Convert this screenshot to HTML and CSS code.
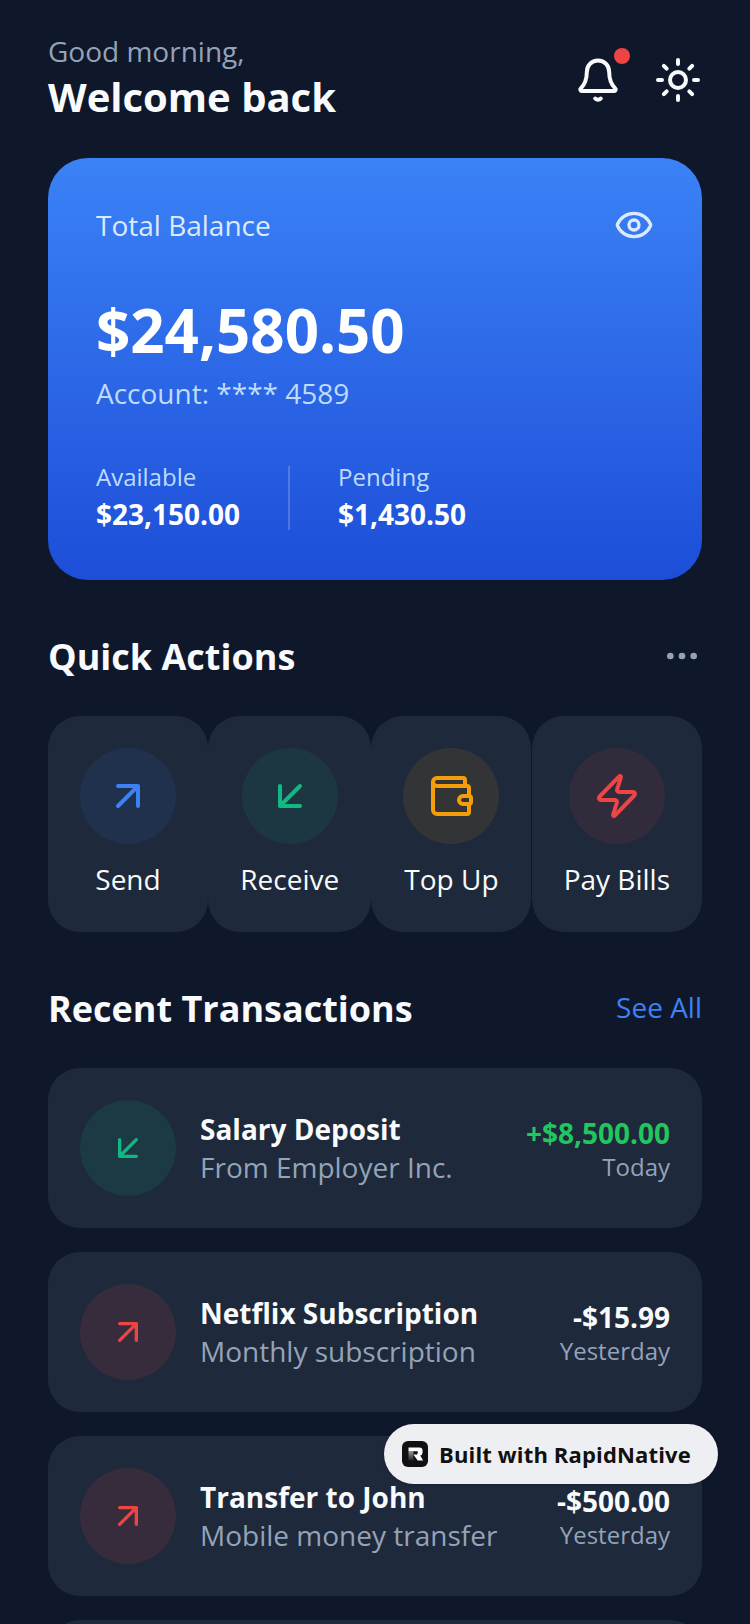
FILE: index.html
```html
<!DOCTYPE html>
<html lang="en">
<head>
    <meta charset="UTF-8">
    <meta name="viewport" content="width=device-width, initial-scale=1.0">
    <title>Wallet Home</title>
    <link rel="stylesheet" href="styles.css">
</head>
<body>
    <div id="screen">
        <header class="top-bar">
            <div>
                <div class="greeting">Good morning,</div>
                <div class="welcome">Welcome back</div>
            </div>
            <div class="top-icons">
                <div class="bell-wrap">
                    <svg class="icon-48 white" viewBox="0 0 24 24"><path d="M12 2.200c-3.300 0-5.600 2.600-5.600 5.900 0 4-1 6.100-3 8.100-.5.5-.2 1.300.5 1.300h16.200c.7 0 1-.8.5-1.300-2-2-3-4.100-3-8.100 0-3.300-2.300-5.900-5.600-5.900z"/><path d="M10.600 21.300c.8.7 2 .7 2.800 0"/></svg>
                    <span class="dot"></span>
                </div>
                <svg class="icon-48 white" viewBox="0 0 24 24"><circle cx="12" cy="12" r="4"/><path d="M12 2v2M12 20v2M4.930 4.930l1.410 1.410M17.660 17.660l1.410 1.410M2 12h2M20 12h2M6.340 17.660l-1.410 1.410M19.070 4.930l-1.410 1.410"/></svg>
            </div>
        </header>

        <section class="balance-card">
            <div class="balance-top">
                <span class="balance-label">Total Balance</span>
                <svg class="icon-40 pale" viewBox="0 0 24 24"><path d="M2.060 12.350a1 1 0 0 1 0-.7 10.750 10.750 0 0 1 19.880 0 1 1 0 0 1 0 .7 10.750 10.750 0 0 1-19.880 0"/><circle cx="12" cy="12" r="3"/></svg>
            </div>
            <div class="balance-amount">$24,580.50</div>
            <div class="balance-account">Account: **** 4589</div>
            <div class="balance-split">
                <div class="split-col">
                    <div class="split-label">Available</div>
                    <div class="split-value">$23,150.00</div>
                </div>
                <div class="split-line"></div>
                <div class="split-col">
                    <div class="split-label">Pending</div>
                    <div class="split-value">$1,430.50</div>
                </div>
            </div>
        </section>

        <div class="section-head actions-head">
            <h2>Quick Actions</h2>
            <svg class="icon-40 slate head-side" viewBox="0 0 24 24"><circle cx="5" cy="12" r="1"/><circle cx="12" cy="12" r="1"/><circle cx="19" cy="12" r="1"/></svg>
        </div>
        <div class="actions">
            <div class="action">
                <div class="circle tint-blue"><svg class="icon-48 blue" viewBox="0 0 24 24"><path d="M7 7h10v10M7 17 17 7"/></svg></div>
                <span>Send</span>
            </div>
            <div class="action action-wide">
                <div class="circle tint-green"><svg class="icon-48 green" viewBox="0 0 24 24"><path d="M17 7 7 17M17 17H7V7"/></svg></div>
                <span>Receive</span>
            </div>
            <div class="action">
                <div class="circle tint-amber"><svg class="icon-48 amber" viewBox="0 0 24 24"><path d="M19 7V4a1 1 0 0 0-1-1H5a2 2 0 0 0 0 4h15a1 1 0 0 1 1 1v4h-3a2 2 0 0 0 0 4h3a1 1 0 0 0 1-1v-2a1 1 0 0 0-1-1"/><path d="M3 5v14a2 2 0 0 0 2 2h15a1 1 0 0 0 1-1v-4"/></svg></div>
                <span>Top Up</span>
            </div>
            <div class="action">
                <div class="circle tint-red"><svg class="icon-48 red" viewBox="0 0 24 24"><path d="M4 14a1 1 0 0 1-.78-1.630l9.900-10.200a.5.5 0 0 1 .86.46l-1.920 6.020A1 1 0 0 0 13 10h7a1 1 0 0 1 .78 1.630l-9.900 10.200a.5.5 0 0 1-.86-.46l1.920-6.020A1 1 0 0 0 11 14z"/></svg></div>
                <span>Pay Bills</span>
            </div>
        </div>

        <div class="section-head recent-head">
            <h2>Recent Transactions</h2>
            <a class="see-all">See All</a>
        </div>
        <div class="tx-list">
            <div class="tx">
                <div class="circle tx-green"><svg class="icon-40 green" viewBox="0 0 24 24"><path d="M17 7 7 17M17 17H7V7"/></svg></div>
                <div class="tx-info">
                    <div class="tx-title">Salary Deposit</div>
                    <div class="tx-sub">From Employer Inc.</div>
                </div>
                <div class="tx-right">
                    <div class="tx-amount income">+$8,500.00</div>
                    <div class="tx-date">Today</div>
                </div>
            </div>
            <div class="tx">
                <div class="circle tx-red"><svg class="icon-40 red" viewBox="0 0 24 24"><path d="M7 7h10v10M7 17 17 7"/></svg></div>
                <div class="tx-info">
                    <div class="tx-title">Netflix Subscription</div>
                    <div class="tx-sub">Monthly subscription</div>
                </div>
                <div class="tx-right">
                    <div class="tx-amount">-$15.99</div>
                    <div class="tx-date">Yesterday</div>
                </div>
            </div>
            <div class="tx">
                <div class="circle tx-red"><svg class="icon-40 red" viewBox="0 0 24 24"><path d="M7 7h10v10M7 17 17 7"/></svg></div>
                <div class="tx-info">
                    <div class="tx-title">Transfer to John</div>
                    <div class="tx-sub">Mobile money transfer</div>
                </div>
                <div class="tx-right">
                    <div class="tx-amount">-$500.00</div>
                    <div class="tx-date">Yesterday</div>
                </div>
            </div>
            <div class="tx"></div>
        </div>

        <div class="built-badge">
            <span class="built-logo"><svg viewBox="0 0 24 24"><defs><linearGradient id="stem" x1="0" y1="0" x2="0" y2="1"><stop offset="0" stop-color="#999"/><stop offset="1" stop-color="#222"/></linearGradient></defs><path d="M6 9.500h4.500V18H6z" fill="url(#stem)"/><path d="M6 6h10a3 3 0 0 1 3 3v1.500a3 3 0 0 1-2.200 2.900L19.500 18h-5l-4-5.500H14l.5-1.200V9.500H6z" fill="#fff"/></svg></span>
            <span>Built with RapidNative</span>
        </div>
    </div>
</body>
</html>
```

FILE: styles.css
```css
html, body {
    margin: 0;
    padding: 0;
}
body {
    background-color: #0f172a;
    font-family: "Open Sans", Arial, sans-serif;
    color: #f8fafc;
}
#screen {
    position: relative;
    width: 750px;
    height: 1624px;
    box-sizing: border-box;
    padding: 30px 48px 0;
    overflow: hidden;
}

/* icons */
svg {
    display: block;
    fill: none;
    stroke-width: 2;
    stroke-linecap: round;
    stroke-linejoin: round;
}
.icon-48 { width: 48px; height: 48px; }
.icon-40 { width: 40px; height: 40px; }
.white { stroke: #f8fafc; }
.pale { stroke: #dbeafe; }
.slate { stroke: #94a3b8; }
.blue { stroke: #3b82f6; }
.green { stroke: #10b981; }
.amber { stroke: #f59e0b; }
.red { stroke: #ef4444; }

/* header */
.top-bar {
    display: flex;
    justify-content: space-between;
    align-items: center;
    margin-bottom: 34px;
}
.greeting {
    font-size: 28px;
    line-height: 40px;
    padding-top: 1px;
    margin-bottom: -1px;
    color: #94a3b8;
}
.welcome {
    font-size: 40px;
    line-height: 54px;
    font-weight: 700;
}
.top-icons {
    display: flex;
    align-items: center;
    gap: 32px;
    margin-top: 6px;
}
.bell-wrap {
    position: relative;
}
.dot {
    position: absolute;
    top: -8px;
    right: -8px;
    width: 16px;
    height: 16px;
    border-radius: 50%;
    background-color: #ef4444;
}

/* balance */
.balance-card {
    height: 422px;
    box-sizing: border-box;
    padding: 47px 48px 48px;
    border-radius: 40px;
    background: linear-gradient(180deg, #3b82f6, #1d4ed8);
}
.balance-top {
    display: flex;
    justify-content: space-between;
    align-items: center;
    height: 40px;
    margin-bottom: 45px;
}
.balance-label {
    font-size: 28px;
    color: #dbeafe;
}
.balance-amount {
    font-size: 60px;
    line-height: 80px;
    font-weight: 700;
    color: #fff;
}
.balance-account {
    font-size: 28px;
    line-height: 40px;
    margin-top: 3px;
    color: #bfdbfe;
    margin-bottom: 47px;
}
.balance-split {
    display: flex;
    align-items: center;
}
.split-col {
    display: flex;
    flex-direction: column;
    gap: 1px;
}
.split-label {
    font-size: 24px;
    line-height: 34px;
    color: #bfdbfe;
}
.split-value {
    font-size: 28px;
    line-height: 38px;
    font-weight: 700;
    color: #fff;
}
.split-line {
    width: 2px;
    height: 64px;
    margin: 2px 48px 0;
    background-color: rgba(255, 255, 255, 0.2);
}

/* sections */
.section-head {
    display: flex;
    justify-content: space-between;
    align-items: center;
}
.section-head h2 {
    margin: 0;
    font-size: 36px;
    line-height: 48px;
    font-weight: 700;
}
.head-side {
    margin-bottom: 3px;
}
.actions-head {
    margin-top: 53px;
    margin-bottom: 35px;
}
.recent-head {
    margin-top: 53px;
    margin-bottom: 35px;
}
.see-all {
    font-size: 28px;
    margin-bottom: 5px;
    color: #3b82f6;
}

/* quick actions */
.actions {
    display: flex;
    justify-content: space-between;
}
.action {
    display: flex;
    flex-direction: column;
    align-items: center;
    gap: 15px;
    padding: 32px 32px 33px;
    border-radius: 32px;
    background-color: #1e293b;
    font-size: 28px;
    line-height: 40px;
}
.action-wide {
    min-width: 99px;
}
.circle {
    display: flex;
    justify-content: center;
    align-items: center;
    flex: none;
    width: 96px;
    height: 96px;
    border-radius: 50%;
}
.tint-blue { background-color: rgba(59, 130, 246, 0.1); }
.tint-green { background-color: rgba(16, 185, 129, 0.1); }
.tint-amber { background-color: rgba(245, 158, 11, 0.1); }
.tint-red { background-color: rgba(239, 68, 68, 0.1); }
.tx-green { background-color: rgba(16, 185, 129, 0.12); }
.tx-red { background-color: rgba(239, 68, 68, 0.12); }

/* transactions */
.tx-list {
    display: flex;
    flex-direction: column;
    gap: 24px;
}
.tx {
    display: flex;
    align-items: center;
    height: 160px;
    box-sizing: border-box;
    padding: 32px;
    border-radius: 32px;
    flex: none;
    background-color: #1e293b;
}
.tx-info {
    flex: 1;
    margin-left: 24px;
}
.tx-title {
    font-size: 28px;
    line-height: 38px;
    font-weight: 700;
}
.tx-sub {
    font-size: 28px;
    line-height: 38px;
    color: #94a3b8;
}
.tx-right {
    text-align: right;
    margin-top: 1px;
}
.tx-amount {
    font-size: 28px;
    line-height: 36px;
    margin-bottom: 1px;
    font-weight: 700;
}
.income {
    color: #22c55e;
}
.tx-date {
    font-size: 24px;
    line-height: 30px;
    color: #94a3b8;
}

/* floating badge */
.built-badge {
    position: absolute;
    top: 1424px;
    left: 384px;
    display: flex;
    align-items: center;
    gap: 11px;
    width: 334px;
    height: 60px;
    padding: 0 18px;
    box-sizing: border-box;
    border-radius: 30px;
    background-color: #eeeff2;
    box-shadow: 0 1px 3px rgba(0, 0, 0, 0.2);
    font-size: 22px;
    font-weight: 700;
    letter-spacing: 0.15px;
    color: #111;
}
.built-logo {
    width: 26px;
    height: 26px;
    border-radius: 6px;
    background-color: #111;
}
.built-logo svg {
    width: 26px;
    height: 26px;
}
.built-logo path {
    stroke: none;
}
```
